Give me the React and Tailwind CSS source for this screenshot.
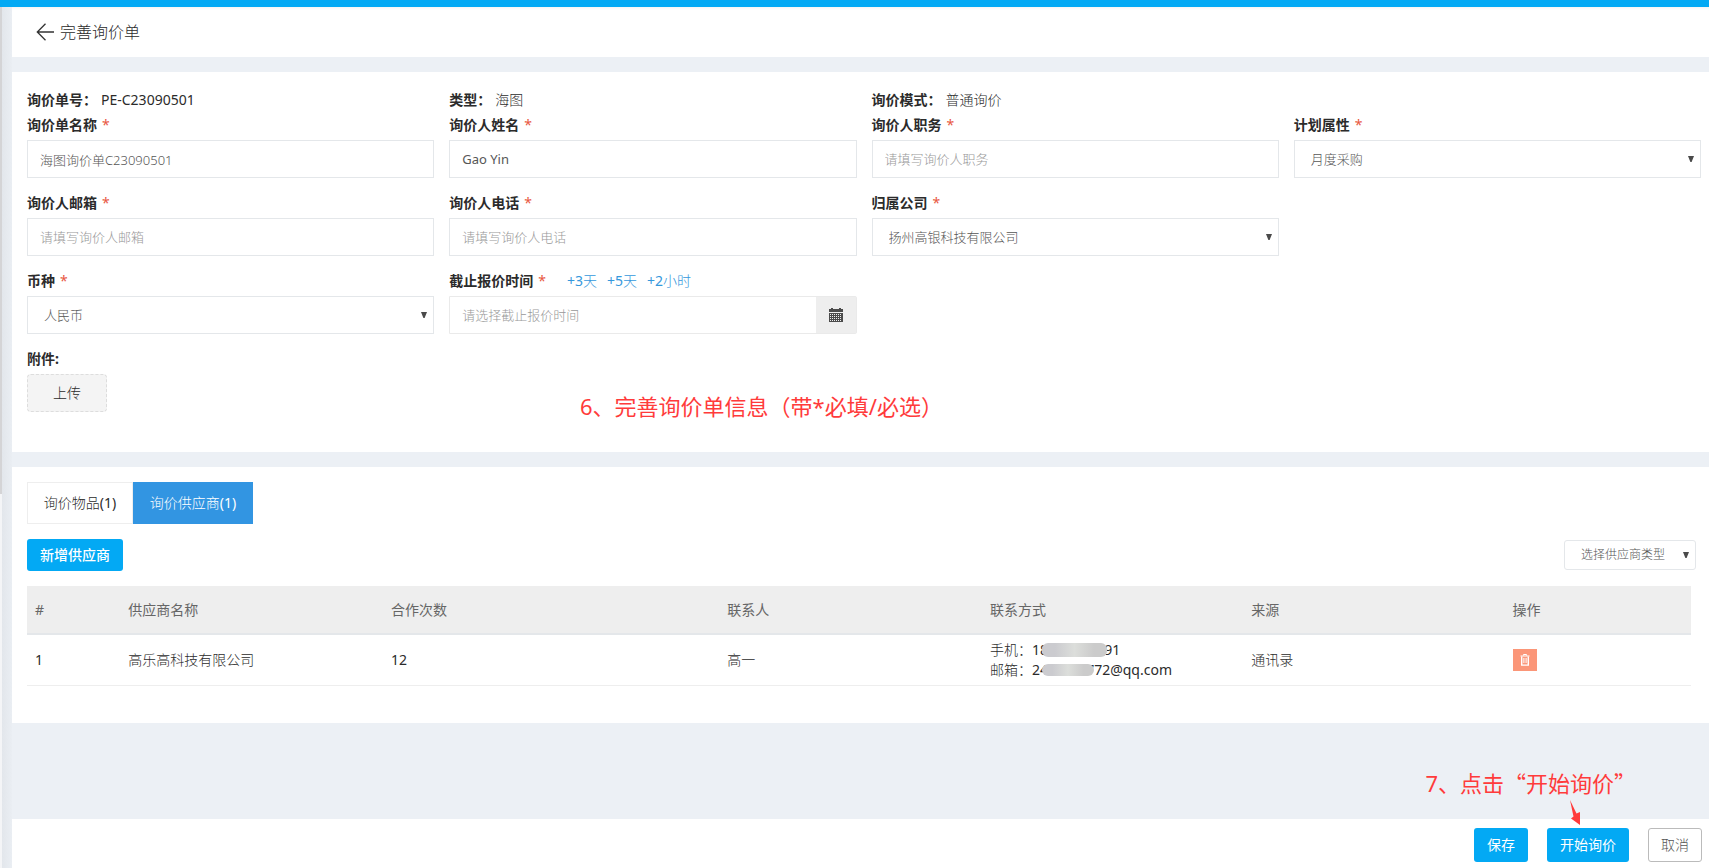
import React from "react";

const latin = "font-['Noto_Sans','Noto_Sans_CJK_SC',sans-serif]";
const fieldBox =
  "h-[38px] w-full rounded-none border border-[#e4e7ea] bg-white text-[13px] text-[#565656] outline-none placeholder:font-light placeholder:text-[#999]";

function Label({ htmlFor, children, required = true }) {
  return (
    <label htmlFor={htmlFor} className="font-bold text-[#2b2b2b]">
      {children}
      {required && <span className="ml-[5px] font-normal text-[#e8573f]">*</span>}
    </label>
  );
}

function Field({ id, label, extra, required, children }) {
  return (
    <div>
      <div className="mb-[3px] flex h-[25px] items-center">
        <Label htmlFor={id} required={required}>{label}</Label>
        {extra}
      </div>
      {children}
    </div>
  );
}

function TextField({ id, label, ...rest }) {
  return (
    <Field id={id} label={label}>
      <input id={id} type="text" className={fieldBox + " px-3"} {...rest} />
    </Field>
  );
}

function Caret() {
  return (
    <svg
      viewBox="0 0 6 6"
      className="pointer-events-none absolute top-1/2 right-[7px] h-[6px] w-[6px] -translate-y-1/2 fill-[#4a4a4a]"
      aria-hidden="true"
    >
      <path d="M0 0h6L3.6 6H2.4z" />
    </svg>
  );
}

function SelectField({ id, label, value }) {
  return (
    <Field id={id} label={label}>
      <div className="relative">
        <select id={id} className={fieldBox + " appearance-none px-4 font-light"}>
          <option>{value}</option>
        </select>
        <Caret />
      </div>
    </Field>
  );
}

function Info({ label, children }) {
  return (
    <div className="flex h-[25px] items-center gap-1">
      <span className="font-bold text-[#2b2b2b]">{label}</span>
      {children}
    </div>
  );
}

function CalendarIcon() {
  return (
    <svg viewBox="0 0 14 14" className="h-[14px] w-[14px]" aria-hidden="true">
      <path fill="#4b4b4b" d="M0 1h2V0h2v1h6V0h2v1h2v3H0zM0 5h14v9H0z" />
      <path
        stroke="#eee"
        strokeWidth="1"
        strokeDasharray="1 1"
        d="M1 6.5h12M1 8.5h12M1 10.5h12M1 12.5h12"
      />
    </svg>
  );
}

function TrashIcon() {
  return (
    <svg viewBox="0 0 10 12" className="h-3 w-[10px]" fill="none" stroke="#fff" aria-hidden="true">
      <path d="M0.5 2h9M3.5 1.5v-1h3v1" />
      <path strokeWidth="1.4" d="M1.7 2.5v8.6h6.6V2.5" />
      <path d="M3.9 4v5M6.1 4v5" />
    </svg>
  );
}

function Mask({ className }) {
  return (
    <span
      className={
        "absolute rounded-md bg-linear-to-r from-[#cbcbcf] from-20% via-[#dcdedb] via-50% to-[#cbcbcb] to-80% " +
        className
      }
    />
  );
}

const columns = [
  ["#", "w-[5.6%]"],
  ["供应商名称", "w-[15.8%]"],
  ["合作次数", "w-[20.2%]"],
  ["联系人", "w-[15.8%]"],
  ["联系方式", "w-[15.7%]"],
  ["来源", "w-[15.7%]"],
  ["操作", "w-[11.2%]"],
];

export default function App() {
  return (
    <div
      className={
        "relative flex min-h-screen flex-col bg-[#ecf0f5] text-sm text-[#2b2b2b] " + latin
      }
    >
      <div className="h-[7px] bg-[#03a9f4]" />
      <div className="flex flex-1">
        <div className="flex w-3 shrink-0 bg-linear-to-r from-[#e1e5ea] to-[#eaeef3]">
          <div className="flex w-[2px] flex-col bg-[#f4f5f7]">
            <div className="h-[487px] bg-[#d4d4d6]" />
          </div>
        </div>

        <main className="flex min-w-0 flex-1 flex-col">
          <header className="flex h-[50px] items-center bg-white px-6 shadow-[inset_0_3px_3px_-2px_rgba(0,0,0,0.06)]">
            <a href="#back" className="flex items-center gap-[6px] text-base font-light">
              <svg viewBox="0 0 18 18" className="h-[18px] w-[18px]" fill="none" stroke="#333" strokeWidth="1.3" aria-hidden="true">
                <path d="M9.5 0.8L1.3 9l8.2 8.2M1.3 9H18" />
              </svg>
              <h1>完善询价单</h1>
            </a>
          </header>

          <section className="relative mt-[15px] bg-white pt-[15px] pr-2 pb-10 pl-[15px]">
            <div className="grid grid-cols-4 gap-x-[15px]">
              <Info label="询价单号：">
                <span>PE-C23090501</span>
              </Info>
              <Info label="类型：">
                <span className="font-light">海图</span>
              </Info>
              <Info label="询价模式：">
                <span className="font-light">普通询价</span>
              </Info>
            </div>
            <form className="grid grid-cols-4 gap-x-[15px] gap-y-3">
              <Field id="name" label="询价单名称">
                <input id="name" type="text" defaultValue="海图询价单C23090501" className={fieldBox + " px-3 font-light"} />
              </Field>
              <TextField id="person" label="询价人姓名" defaultValue="Gao Yin" />
              <TextField id="job" label="询价人职务" placeholder="请填写询价人职务" />
              <SelectField id="plan" label="计划属性" value="月度采购" />
              <TextField id="mail" label="询价人邮箱" placeholder="请填写询价人邮箱" />
              <TextField id="phone" label="询价人电话" placeholder="请填写询价人电话" />
              <SelectField id="company" label="归属公司" value="扬州高银科技有限公司" />
              <div className="col-start-1">
                <SelectField id="currency" label="币种" value="人民币" />
              </div>
              <Field
                id="deadline"
                label="截止报价时间"
                extra={
                  <span className="ml-[21px] flex gap-[10px] text-[#3598dc]">
                    <a href="#d3">+3<span className="font-light">天</span></a>
                    <a href="#d5">+5<span className="font-light">天</span></a>
                    <a href="#h2">+2<span className="font-light">小时</span></a>
                  </span>
                }
              >
                <div className="flex h-[38px] rounded-r-xs border border-[#eaeaea]">
                  <input
                    id="deadline"
                    type="text"
                    placeholder="请选择截止报价时间"
                    className="min-w-0 flex-1 px-3 text-[13px] outline-none placeholder:font-light placeholder:text-[#999]"
                  />
                  <button type="button" aria-label="日历" className="flex w-10 items-center justify-center bg-[#eee]">
                    <CalendarIcon />
                  </button>
                </div>
              </Field>
              <div className="col-start-1">
                <Field id="upload" label="附件:" required={false}>
                  <button
                    id="upload"
                    type="button"
                    className="h-[38px] w-20 rounded-sm border border-dashed border-[#ddd] bg-[#f4f4f4] font-light"
                  >
                    上传
                  </button>
                </Field>
              </div>
            </form>
            <p className="absolute top-[318px] left-[568px] text-[22px] leading-8 whitespace-nowrap text-[#ff3b3b]">
              6、完善询价单信息（带*必填/必选）
            </p>
          </section>

          <section className="mt-[15px] bg-white pt-[15px] pr-[13px] pb-[37px] pl-[15px]">
            <div className="flex h-[42px]">
              <button type="button" className="w-[106px] border border-[#eee]">
                <span className="font-light">询价物品</span>(1)
              </button>
              <button type="button" className="w-[120px] bg-[#3295e2] text-white">
                <span className="font-light">询价供应商</span>(1)
              </button>
            </div>
            <div className="my-[15px] flex items-center justify-between">
              <button type="button" className="h-8 w-24 rounded-[3px] bg-[#03a9f4] font-medium text-white">
                新增供应商
              </button>
              <div className="relative w-[132px]">
                <select
                  aria-label="选择供应商类型"
                  className="h-[30px] w-full appearance-none rounded-[3px] border border-[#e4e7ea] bg-white px-4 text-xs font-light text-[#565656]"
                >
                  <option>选择供应商类型</option>
                </select>
                <Caret />
              </div>
            </div>
            <div className="pr-[5px]">
              <table className="w-full table-fixed border-collapse text-left">
                <thead>
                  <tr className="h-12 border-b-2 border-[#e4e7ea] bg-[#eee] text-[#666]">
                    {columns.map(([name, width]) => (
                      <th key={name} className={"px-2 font-normal " + width}>{name}</th>
                    ))}
                  </tr>
                </thead>
                <tbody>
                  <tr className="h-[51px] border-b border-[#eee]">
                    <td className="px-2">1</td>
                    <td className="px-2 font-light">高乐高科技有限公司</td>
                    <td className="px-2">12</td>
                    <td className="px-2 font-light">高一</td>
                    <td className="px-2 leading-5 whitespace-nowrap">
                      <div className="relative">
                        <span className="font-light">手机：</span>18
                        <span className="inline-block w-[56px]" />91
                        <Mask className="top-[3px] left-[52px] h-[14px] w-[65px]" />
                      </div>
                      <div className="relative">
                        <span className="font-light">邮箱：</span>24
                        <span className="inline-block w-[38px]" />772@qq.com
                        <Mask className="top-1 left-[52px] h-3 w-[52px]" />
                      </div>
                    </td>
                    <td className="px-2 font-light">通讯录</td>
                    <td className="px-2">
                      <button type="button" aria-label="删除" className="flex h-[22px] w-6 items-center justify-center bg-[#fb9678]">
                        <TrashIcon />
                      </button>
                    </td>
                  </tr>
                </tbody>
              </table>
            </div>
          </section>

          <footer className="relative mt-auto flex h-[49px] items-center justify-end gap-[19px] bg-white pt-[3px] pr-[7px]">
            <button type="button" className="h-[34px] w-[54px] rounded-[3px] bg-[#03a9f4] text-white">保存</button>
            <button type="button" className="h-[34px] w-[82px] rounded-[3px] bg-[#03a9f4] text-white">开始询价</button>
            <button type="button" className="h-[34px] w-[54px] rounded-[3px] border border-[#bbb] bg-white font-light text-[#565656]">取消</button>
            <p className="absolute right-[73px] bottom-[69px] text-[22px] leading-8 whitespace-nowrap text-[#ff3b3b]">
              7、点击<span className="font-['Noto_Sans_CJK_SC',sans-serif]">“开始询价”</span>
            </p>
            <svg viewBox="0 0 12 26" className="absolute right-[128px] bottom-[42px] h-[26px] w-3" fill="#ff3b3b" aria-hidden="true">
              <path d="M1 0L7.5 13.5L11 12L11 25L2 18.5L4.5 16.5Z" />
            </svg>
          </footer>
        </main>
      </div>
    </div>
  );
}
